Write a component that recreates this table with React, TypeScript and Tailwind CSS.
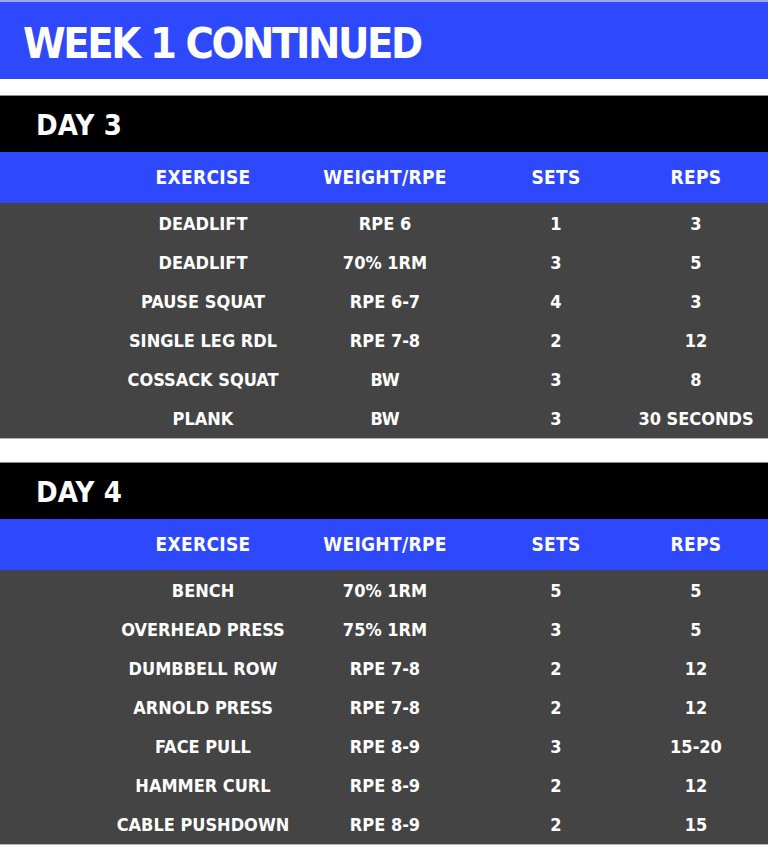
import React from "react";

type Row = [string, string, string, string];

const day3: Row[] = [
  ["DEADLIFT", "RPE 6", "1", "3"],
  ["DEADLIFT", "70% 1RM", "3", "5"],
  ["PAUSE SQUAT", "RPE 6-7", "4", "3"],
  ["SINGLE LEG RDL", "RPE 7-8", "2", "12"],
  ["COSSACK SQUAT", "BW", "3", "8"],
  ["PLANK", "BW", "3", "30 SECONDS"],
];

const day4: Row[] = [
  ["BENCH", "70% 1RM", "5", "5"],
  ["OVERHEAD PRESS", "75% 1RM", "3", "5"],
  ["DUMBBELL ROW", "RPE 7-8", "2", "12"],
  ["ARNOLD PRESS", "RPE 7-8", "2", "12"],
  ["FACE PULL", "RPE 8-9", "3", "15-20"],
  ["HAMMER CURL", "RPE 8-9", "2", "12"],
  ["CABLE PUSHDOWN", "RPE 8-9", "2", "15"],
];

const font = "font-['DejaVu_Sans_Condensed','DejaVu_Sans',sans-serif]";

function DaySection({ title, rows }: { title: string; rows: Row[] }) {
  return (
    <section>
      <div className="h-[57px] bg-black border-t border-[#8a8a8a] flex items-center pl-[36px]">
        <h2 className={`${font} font-bold text-[29px] leading-none text-white tracking-[0.2px] pt-[2px]`}>
          {title}
        </h2>
      </div>
      <div className="h-[51px] bg-[#2e48fc] grid grid-cols-[180px_184px_158px_122px] pl-[113px] items-center">
        {["EXERCISE", "WEIGHT/RPE", "SETS", "REPS"].map((h) => (
          <div key={h} className={`${font} font-bold text-[19px] leading-none text-white text-center tracking-[0.3px]`}>
            {h}
          </div>
        ))}
      </div>
      <div className="bg-[#444444] pt-[1px] border-b border-[#b5b5b5]">
        {rows.map((r, i) => (
          <div key={i} className="h-[39px] grid grid-cols-[180px_184px_158px_122px] pl-[113px] items-center">
            {r.map((c, j) => (
              <div key={j} className={`${font} font-bold text-[18px] leading-none text-white text-center whitespace-nowrap`}>
                {c}
              </div>
            ))}
          </div>
        ))}
      </div>
    </section>
  );
}

export default function App() {
  return (
    <div className="w-[768px] h-[847px] bg-white overflow-hidden">
      <div className="border-t-2 border-[#9aa4e8]">
        <div className="h-[77px] bg-[#2e48fc] flex items-center pl-[23px]">
          <h1 className={`${font} font-bold text-[43px] leading-none text-white tracking-[-2.4px] pt-[5px]`}>
            WEEK 1 CONTINUED
          </h1>
        </div>
      </div>
      <div className="h-[16px]" />
      <DaySection title="DAY 3" rows={day3} />
      <div className="h-[23px]" />
      <DaySection title="DAY 4" rows={day4} />
    </div>
  );
}
